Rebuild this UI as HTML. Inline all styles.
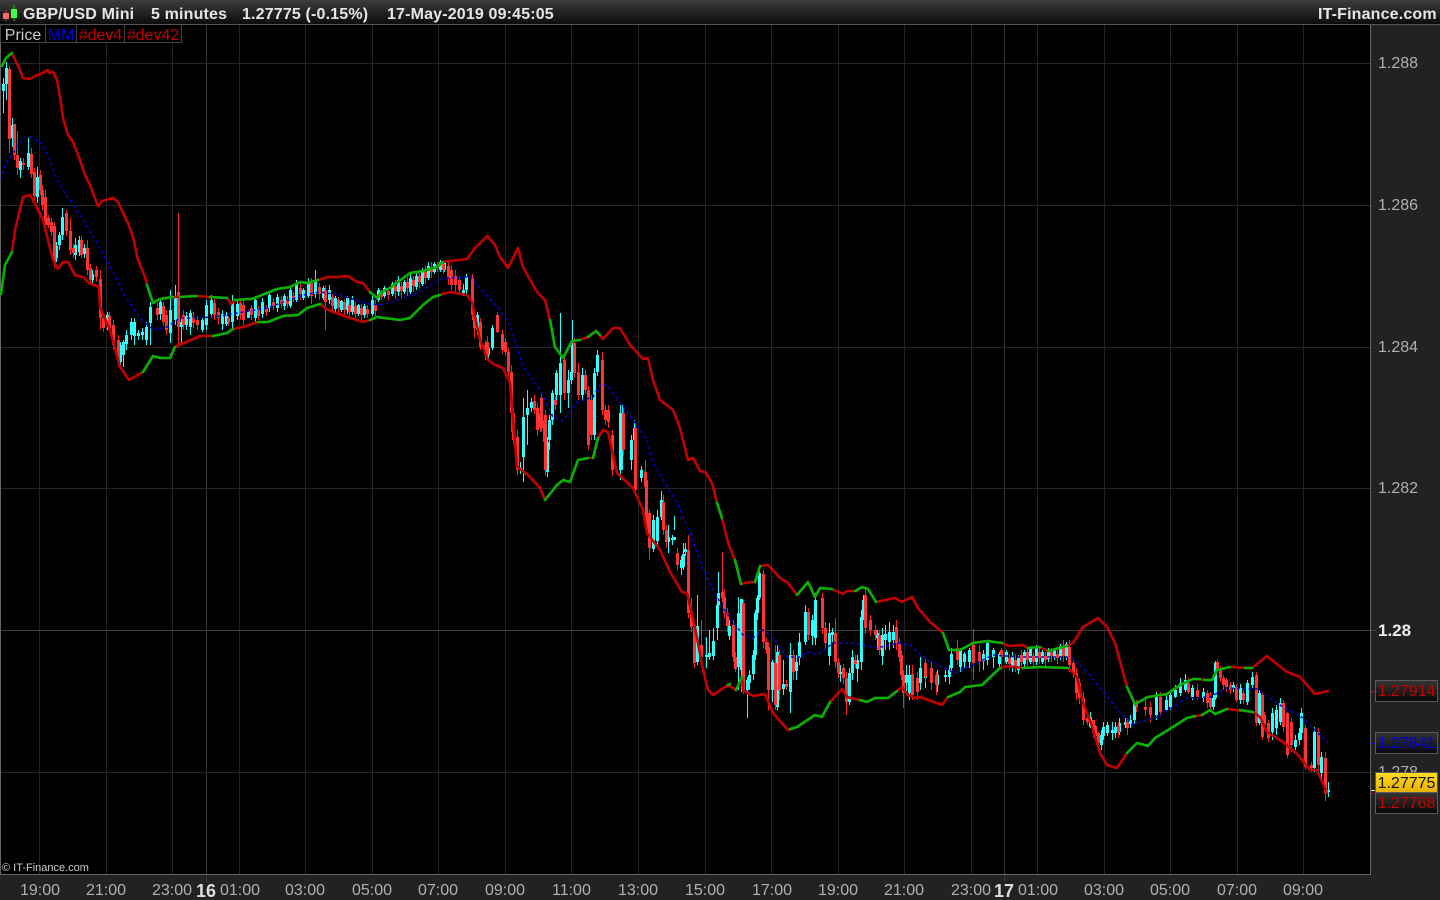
<!DOCTYPE html>
<html><head><meta charset="utf-8"><title>GBP/USD Mini</title>
<style>
html,body{margin:0;padding:0;background:#000;width:1440px;height:900px;overflow:hidden}
body{position:relative;font-family:"Liberation Sans",sans-serif}
.a{position:absolute;white-space:nowrap}
#top{left:0;top:0;width:1440px;height:24px;background:linear-gradient(#3e3e3e,#262626 45%,#0c0c0c);border-bottom:1px solid #555}
.t{font-weight:bold;font-size:16px;color:#e6e6e6;top:6px;line-height:18px;letter-spacing:.16px}
.lg{top:25px;height:17px;border:1px solid #444;border-top:0;font-size:16px;line-height:19px;text-align:center;box-sizing:content-box;background:#000;overflow:hidden}
.lg span{position:relative;top:1px}
#right{left:1371px;top:25px;width:69px;height:850px;background:#222}
#bottom{left:0;top:875px;width:1440px;height:25px;background:#222}
.y{left:1378px;font-size:16px;line-height:18px;color:#b0b0b0}
.x{top:882px;font-size:16px;line-height:18px;color:#b0b0b0}
.tag{left:1375px;width:61px;height:20px;border:1px solid #5a5a5a;font-size:16px;line-height:22px;text-align:center;background:linear-gradient(#333,#0a0a0a)}
</style></head><body>
<div class="a" id="right"></div><div class="a" id="bottom"></div>
<svg class="a" style="left:0;top:0" width="1440" height="900" viewBox="0 0 1440 900">
<path fill="none" stroke="#232323" d="M39.500 25V882M106.500 25V882M172.500 25V882M239.500 25V882M305.500 25V882M372.500 25V882M438.500 25V882M505.500 25V882M571.500 25V882M638.500 25V882M705.500 25V882M771.500 25V882M838.500 25V882M904.500 25V882M971.500 25V882M1037.500 25V882M1104.500 25V882M1170.500 25V882M1237.500 25V882M1303.500 25V882"/>
<path fill="none" stroke="#363636" d="M206.500 25V882M1004.500 25V882"/>
<path fill="none" stroke="#262626" d="M0 63.500H1376M0 205.500H1376M0 347.500H1376M0 488.500H1376M0 772.500H1376"/>
<path fill="none" stroke="#404040" d="M0 630.500H1376"/>
<path fill="none" stroke="#666" d="M0.500 25V875M1370.500 25V875M0 874.500H1371"/>

<g transform="translate(.5 0)">
<path fill="none" stroke="#20ffff" stroke-width="1" d="M3 78V113M6 62V100M12 118V147M20 158V178M28 138V170M37 167V203M56 242V262M59 232V250M62 208V240M75 238V260M79 236V256M84 244V258M92 270V284M107 312V330M120 342V367M123 340V367M126 330V350M131 318V340M134 318V345M138 330V340M142 328V340M146 322V345M150 302V345M160 298V320M170 290V343M175 285V325M181 317V345M186 312V330M190 310V335M202 318V332M206 300V330M211 295V318M222 310V330M226 312V326M232 295V330M237 300V320M248 310V318M255 296V322M262 298V318M269 292V312M277 294V312M284 294V310M290 286V308M296 280V302M303 288V300M308 278V298M315 270V298M323 286V300M329 285V304M335 296V312M341 300V312M347 296V314M352 296V315M358 304V316M364 304V318M372 296V316M378 288V302M384 286V298M392 282V296M398 276V296M404 280V294M410 274V294M416 272V290M422 268V286M428 262V280M434 262V274M440 260V272M444 262V272M463 284V296M466 274V296M477 312V335M488 342V360M492 325V350M497 312V330M520 462V474M523 398V482M527 390V445M531 398V412M547 437V477M549 415V450M552 390V425M556 370V400M560 313V413M568 370V408M571 365V384M572 320V375M582 368V400M594 368V440M597 350V376M620 405V480M622 405V470M631 435V470M634 420V445M641 466V482M653 515V552M657 510V545M661 491V520M668 525V553M672 535V545M674 516V530M681 556V575M683 543V570M685 543V556M697 595V665M706 637V668M709 630V660M713 628V660M717 600V640M718 572V610M729 620V640M738 597V690M741 599V692M747 677V718M749 670V690M753 650V680M755 610V660M757 595V620M759 565V600M772 660V702M777 645V710M783 660V695M790 643V713M796 655V680M799 633V665M805 605V645M812 615V645M815 593V645M829 623V665M832 628V642M840 665V682M849 668V705M852 650V680M857 655V682M861 610V670M863 595V620M877 630V650M882 628V665M885 625V650M889 622V650M893 625V648M906 665V695M909 665V700M920 657V690M925 660V688M937 670V692M945 670V682M949 665V684M951 648V672M960 648V672M964 652V668M969 648V668M983 650V670M987 640V665M993 648V668M999 652V668M1006 650V664M1012 652V672M1018 655V674M1024 650V668M1030 646V664M1036 645V665M1042 650V664M1048 648V662M1054 648V660M1060 644V660M1066 642V660M1090 712V728M1101 730V750M1103 722V740M1107 722V736M1112 722V740M1115 722V738M1119 718V735M1125 718V728M1130 715V728M1134 702V724M1156 692V720M1166 695V712M1170 690V710M1175 685V698M1180 678V696M1185 674V692M1192 685V700M1203 688V702M1213 695V710M1215 661V700M1233 682V692M1240 684V704M1247 680V705M1252 672V688M1259 690V725M1272 708V740M1276 705V735M1280 698V725M1295 735V750M1299 728V745M1301 708V740M1314 727V772M1321 752V780M1328 782V797"/>
<path fill="none" stroke="#30ffff" stroke-width="3" d="M3 84V91M6 68V84M12 125V138M20 161V170M28 153V167M37 177V197M56 246V258M59 235V245M62 217V235M75 245V255M79 240V252M84 248V254M92 274V280M107 315V325M120 345V362M123 342V355M126 335V344M131 322V335M134 322V336M138 333V336M142 332V335M146 327V340M150 307V323M160 302V314M170 310V333M175 298V320M181 322V327M186 316V325M190 313V327M202 320V330M206 305V325M211 300V314M222 314V324M226 316V324M232 303V322M237 304V316M248 311V318M255 300V318M262 302V314M269 295V308M277 297V308M284 296V306M290 290V306M296 284V300M303 290V298M308 282V296M315 280V294M323 288V298M329 290V300M335 298V309M341 301V310M347 298V310M352 300V312M358 305V314M364 306V315M372 300V314M378 290V300M384 288V296M392 284V294M398 280V292M404 282V292M410 278V292M416 276V287M422 272V284M428 266V278M434 264V272M440 262V270M444 263V270M463 290V293M466 277V290M477 315V330M488 348V355M492 328V348M497 315V325M520 468V470M523 417V457M527 408V415M531 402V408M547 442V472M549 420V440M552 393V420M556 373V395M560 363V395M568 380V393M571 372V380M572 345V372M582 375V395M594 373V435M597 355V372M620 413V470M622 413V440M631 440V460M634 428V440M641 470V478M653 520V549M657 517V541M661 500V517M668 537V542M672 538V540M674 537V540M681 560V568M683 554V567M685 549V552M697 626V662M706 655V657M709 653V657M713 641V656M717 605V628M718 593V605M729 626V636M738 613V667M741 599V670M747 680V690M749 675V683M753 655V674M755 613V655M757 598V613M759 573V598M772 662V690M777 652V707M783 684V689M790 655V692M796 662V671M799 642V658M805 612V642M812 620V636M815 600V638M829 633V656M832 632V635M840 672V674M849 673V702M852 657V673M857 660V669M861 617V662M863 600V617M877 633V638M882 635V656M885 634V640M889 632V642M893 632V640M906 675V683M909 675V693M920 668V683M925 668V678M937 675V685M945 675V677M949 670V677M951 654V668M960 650V667M964 654V662M969 650V662M983 654V661M987 643V660M993 650V657M999 654V664M1006 652V662M1012 656V668M1018 658V670M1024 652V664M1030 648V662M1036 648V662M1042 652V662M1048 650V659M1054 650V658M1060 646V657M1066 644V657M1090 717V727M1101 735V745M1103 727V736M1107 725V733M1112 730V733M1115 727V733M1119 723V732M1125 722V725M1130 720V724M1134 703V720M1156 697V715M1166 700V710M1170 695V707M1175 690V697M1180 683V693M1185 680V690M1192 688V697M1203 692V698M1213 698V707M1215 663V698M1233 685V688M1240 688V700M1247 683V702M1252 677V685M1259 693V723M1272 713V732M1276 710V728M1280 703V722M1295 740V747M1299 733V740M1301 713V733M1314 732V768M1321 757V773M1328 790V792"/>

<path fill="none" stroke="#ff2020" stroke-width="1" d="M9 66V153M14 124V160M17 131V175M23 158V170M31 148V178M34 168V200M40 170V195M42 185V210M45 190V232M48 215V228M51 218V236M54 222V268M66 210V236M70 218V255M73 244V258M81 236V258M87 240V275M90 264V284M96 266V282M100 270V330M103 314V332M109 312V332M113 320V350M118 335V367M157 303V320M163 302V326M166 310V335M178 213V345M183 310V330M193 312V328M197 316V330M214 298V320M218 308V325M228 316V326M240 298V320M243 300V326M251 305V320M258 306V320M266 305V316M273 298V310M281 296V308M287 296V308M293 292V302M300 282V300M311 278V304M319 283V300M325 285V330M332 294V312M338 297V314M344 299V316M349 300V318M355 302V320M361 304V322M367 305V318M375 300V316M381 290V300M388 287V300M395 280V298M401 282V298M407 277V296M413 276V292M419 270V288M425 265V284M431 262V278M437 262V272M443 262V274M448 262V285M451 265V290M455 270V292M459 276V294M472 274V320M474 312V338M480 318V350M485 340V360M487 336V360M497 312V333M502 330V354M505 338V356M508 348V376M511 365V432M513 408V445M517 430V475M534 395V414M537 402V436M540 408V432M541 392V432M544 415V446M545 410V476M555 396V410M564 355V400M574 338V378M578 363V400M585 370V394M588 386V450M591 395V440M602 352V415M605 405V425M608 405V428M612 430V476M623 408V456M635 423V495M646 475V535M645 460V490M649 510V560M663 495V535M666 525V548M677 548V570M688 535V618M691 598V632M694 622V668M701 620V662M722 552V602M724 589V618M727 608V632M733 620V662M735 652V672M743 600V694M763 570V648M766 638V654M768 642V710M775 645V710M779 650V700M786 680V690M793 650V680M808 608V640M822 593V634M825 645V650M825 622V650M835 618V668M838 658V678M843 664V684M846 672V715M855 655V668M865 590V634M870 615V636M875 625V640M879 630V655M896 620V650M899 638V662M901 650V680M903 670V708M912 665V700M917 672V700M925 658V682M931 662V690M936 672V695M957 640V665M973 629V680M979 645V672M1001 648V670M1009 654V670M1015 654V672M1021 650V668M1027 648V666M1033 652V668M1039 648V664M1045 652V666M1051 648V662M1057 650V664M1063 640V662M1069 640V672M1073 660V678M1076 668V700M1079 678V704M1083 692V725M1087 715V725M1093 720V738M1095 725V740M1098 732V748M1118 722V738M1127 718V735M1136 700V712M1145 700V716M1150 702V722M1160 692V716M1188 678V694M1197 684V700M1207 690V708M1210 692V712M1217 660V672M1220 666V682M1223 675V690M1226 678V692M1230 682V694M1236 684V702M1243 690V704M1256 672V726M1262 692V740M1264 712V730M1268 720V742M1283 700V732M1287 712V758M1291 718V752M1305 725V770M1311 762V772M1318 728V770M1325 752V801"/>
<path fill="none" stroke="#ff3333" stroke-width="3" d="M9 69V139M14 124V155M17 155V168M23 163V165M31 154V174M34 172V196M40 175V190M42 190V205M45 197V225M48 218V225M51 222V232M54 226V263M66 213V231M70 231V250M73 248V253M81 240V255M87 248V270M90 268V280M96 270V277M100 279V318M103 318V328M109 316V328M113 325V345M118 340V362M157 308V315M163 306V322M166 315V330M178 292V327M183 315V325M193 317V323M197 320V325M214 303V315M218 312V318M228 318V322M240 303V315M243 305V320M251 308V315M258 309V316M266 308V312M273 302V306M281 300V304M287 300V304M293 296V298M300 288V294M311 283V296M319 287V294M325 290V302M332 297V306M338 300V308M344 302V310M349 305V312M355 306V314M361 308V315M367 309V314M375 304V311M381 294V297M388 291V295M395 286V291M401 286V291M407 282V288M413 280V286M419 276V282M425 272V278M431 268V272M437 265V268M443 264V270M448 266V278M451 270V285M455 276V285M459 280V290M472 278V315M474 316V328M480 322V347M485 345V355M487 342V355M497 315V332M502 334V350M505 342V352M508 352V372M511 372V413M513 413V440M517 437V470M534 401V410M537 408V430M540 413V428M541 398V428M544 420V442M545 415V470M555 400V405M564 360V393M574 343V373M578 372V395M585 375V390M588 390V445M591 400V435M602 360V410M605 410V420M608 410V422M612 435V470M623 413V450M635 428V490M646 480V530M645 472V487M649 513V548M663 502V530M666 530V542M677 553V565M688 550V613M691 613V627M694 627V663M701 645V657M722 592V598M724 597V613M727 613V626M733 625V657M735 657V669M743 603V690M763 574V642M766 642V650M768 647V690M775 663V705M779 655V690M786 684V687M793 655V672M808 612V635M822 598V628M825 628V643M835 633V662M838 662V673M843 668V678M846 678V702M855 660V664M865 595V628M870 620V630M875 630V635M879 635V650M896 627V643M899 643V657M901 655V675M903 675V693M912 674V695M917 678V692M925 663V677M931 668V683M936 675V685M957 648V660M973 645V663M979 652V662M1001 650V657M1009 658V664M1015 660V666M1021 655V662M1027 652V660M1033 656V662M1039 652V658M1045 656V660M1051 652V656M1057 654V658M1063 646V656M1069 647V665M1073 663V673M1076 673V693M1079 683V698M1083 698V720M1087 718V722M1093 720V733M1095 726V736M1098 733V743M1118 726V732M1127 722V728M1136 703V707M1145 707V710M1150 707V715M1160 697V712M1188 683V692M1197 690V697M1207 693V703M1210 698V707M1217 662V670M1220 670V678M1223 678V685M1226 680V687M1230 685V690M1236 687V700M1243 693V700M1256 675V723M1262 695V737M1264 715V725M1268 723V738M1283 703V727M1287 713V755M1291 722V745M1305 728V767M1311 765V768M1318 732V765M1325 758V793"/>
</g>

<path fill="none" stroke="#0000e6" stroke-width="1.500" stroke-dasharray="3 3" d="M1 180L5 165L15 150L23 138L30 137L40 142L48 155L55 175L63 190L77 210L97 243L117 280L123 293L140 318L153 330L167 327L180 318L200 318L220 316L267 308L303 295L320 292L340 295L367 304L383 305L417 293L443 278L470 277L500 310L510 325L523 367L540 390L553 417L563 421L577 402L593 397L600 385L607 385L633 420L647 440L653 463L677 503L690 533L703 570L723 608L743 635L753 638L763 630L773 638L787 657L800 657L807 652L817 655L833 643L853 643L877 648L898 643L910 645L927 660L955 673L977 663L993 655L1020 657L1067 657L1073 658L1090 675L1120 713L1133 724L1157 717L1187 698L1210 697L1227 688L1257 689L1283 707L1303 718L1328 743"/>

<g fill="none" stroke-width="2.600" stroke-linejoin="round" stroke-linecap="round">
<path stroke="#c40000" d="M12 53L16 62L20 70L23 78L30 79L35 76L43 73L48 70L50 73L53 72L57 80L60 97L63 118L68 135L73 142L80 160L85 175L90 185L98 206L102 201L113 198L118 202L125 217L128 223L133 237L138 260L145 277L147 285L153 303L160 299L173 297L197 296L210 297L227 298L231 304L235 300L252 299L267 293L277 289L290 287L300 282L307 283L318 280L328 277L337 277L348 276L357 282L363 283L370 292L377 298L382 292L390 288L410 273L423 271L437 267L443 262L467 259L475 248L487 236L495 245L500 257L508 268L518 248L523 267L537 292L545 300L550 320L555 347L563 358L572 341L580 340L588 337L596 331L603 339L613 328L620 328L630 345L643 359L648 358L653 380L660 400L673 410L680 428L688 460L693 458L700 471L705 472L712 483L717 503L722 518L728 543L735 560L741 584L750 582L755 582L760 566L768 565L780 578L788 583L797 595L808 582L815 597L820 588L832 589L843 594L847 591L857 591L862 587L868 589L876 602L895 598L902 602L912 597L918 608L930 622L943 633L949 650L960 650L973 643L987 641L1002 643L1008 646L1023 645L1028 648L1040 647L1048 651L1067 646L1073 643L1083 627L1098 618L1107 627L1115 643L1127 687L1135 704L1148 697L1167 694L1180 685L1193 679L1212 680L1217 670L1230 667L1252 668L1267 656L1287 672L1300 677L1315 694L1328 691"/>
<path stroke="#c40000" d="M12 252L15 230L23 197L30 195L35 204L43 220L53 260L58 269L63 262L68 262L75 275L83 277L89 283L99 287L100 307L110 330L120 367L129 380L143 372L153 356L160 358L170 358L175 347L200 336L213 336L227 333L233 329L243 327L258 322L268 322L283 316L298 315L307 308L320 304L328 310L347 317L363 322L370 320L377 317L400 320L410 318L423 305L433 297L450 292L467 295L472 302L480 340L488 360L495 365L503 368L510 383L517 467L528 475L540 488L545 500L557 485L563 480L570 482L578 460L588 458L593 458L598 438L603 430L608 432L617 473L633 488L643 510L647 533L660 550L670 572L682 592L687 593L695 627L703 670L708 690L713 695L728 685L736 690L742 677L743 690L753 696L765 694L773 713L788 730L797 727L815 715L822 717L830 702L842 689L847 697L867 702L875 698L888 698L902 687L908 695L915 698L920 697L942 705L948 697L960 692L965 687L982 685L1000 668L1007 666L1023 668L1040 667L1068 668L1077 677L1083 703L1090 720L1100 753L1107 765L1117 768L1127 753L1137 743L1148 746L1155 738L1168 730L1187 718L1202 715L1210 710L1215 714L1227 709L1253 712L1260 717L1267 732L1283 742L1297 754L1310 770L1317 770L1327 793"/>
<path stroke="#00b400" d="M2 66L6 58L12 53M147 285L153 303L160 299L173 297M180 297L197 296M210 297L227 298M235 300L250 299M252 299L267 293L277 289L290 287L300 282L307 283L318 280M370 292L377 298L382 292L390 288L410 273L423 271L437 267L443 262M550 320L555 347L563 358L572 341L580 340M588 337L596 331L600 335M717 503L722 518M735 560L741 584M755 582L760 566M797 595L808 582L815 597L820 588L832 589M855 591L862 587L868 589L876 602M943 633L949 650L960 650L973 643L987 641L1002 643M1028 648L1040 647M1048 651L1067 646M1127 687L1135 704L1148 697L1167 694L1180 685L1193 679L1200 679M1204 680L1212 680L1217 670L1230 667M1245 668L1252 668"/>
<path stroke="#00b400" d="M1 294L5 265L12 252M143 372L153 356L160 358L170 358L175 347M213 336L227 333L233 329M258 322L268 322L283 316L298 315L307 308L320 304M370 320L377 317L400 320L410 318L423 305L433 297L440 295M545 500L557 485L563 480L570 482L578 460L588 458M593 458L598 438M728 685L730 684M736 690L742 677M790 729L797 727L815 715L822 717L830 702M860 700L867 702L875 698L888 698L897 691M948 697L960 692L965 687L982 685L1000 668M1023 668L1040 667L1068 668M1127 753L1137 743L1148 746L1155 738L1168 730L1187 718L1195 716M1202 715L1210 710L1215 714L1227 709M1240 710L1253 712"/>
</g>

<path fill="none" stroke="#c40000" d="M1371 691.500H1375"/>
<path fill="none" stroke="#0000e6" d="M1371 743.500H1375"/>
<path fill="none" stroke="#ddd" d="M1371 790.500H1375"/>
<path fill="none" stroke="#c40000" d="M1371 793.500H1375"/>
</svg>

<div class="a" id="top"></div>
<svg class="a" style="left:0;top:0" width="20" height="24">
<path stroke="#c44" d="M6 10V21"/><rect x="3" y="13" width="6" height="6" fill="#f66" stroke="none"/>
<path stroke="#2c2" d="M14 5V21"/><rect x="11" y="9" width="6" height="9" fill="#4f4" stroke="none"/>
</svg>
<div class="a t" style="left:23px">GBP/USD Mini</div>
<div class="a t" style="left:151px">5 minutes</div>
<div class="a t" style="left:242px">1.27775 (-0.15%)</div>
<div class="a t" style="left:387px">17-May-2019 09:45:05</div>
<div class="a t" style="left:1318px">IT-Finance.com</div>

<div class="a lg" style="left:0;width:44px;color:#ccc"><span>Price</span></div>
<div class="a lg" style="left:45px;width:30px;color:#0000e6"><span>MM</span></div>
<div class="a lg" style="left:76px;width:47px;color:#c40000"><span>#dev4</span></div>
<div class="a lg" style="left:124px;width:56px;color:#c40000"><span>#dev42</span></div>

<div class="a y" style="top:55px">1.288</div>
<div class="a y" style="top:197px">1.286</div>
<div class="a y" style="top:339px">1.284</div>
<div class="a y" style="top:480px">1.282</div>
<div class="a y" style="top:622px;font-weight:bold;color:#eee;font-size:17px">1.28</div>
<div class="a y" style="top:764px">1.278</div>

<div class="a tag" style="top:680px;color:#c40000">1.27914</div>
<div class="a tag" style="top:732px;color:#0000e6">1.27841</div>
<div class="a tag" style="top:792px;color:#c40000">1.27768</div>
<div class="a tag" style="top:772px;height:19px;color:#111;background:linear-gradient(#ffdc20,#e8b000);line-height:21px">1.27775</div>

<div class="a" style="left:2px;top:862px;font-size:11px;line-height:13px;color:#ccc">© IT-Finance.com</div>

<div class="a x" style="left:20px">19:00</div>
<div class="a x" style="left:86px">21:00</div>
<div class="a x" style="left:152px">23:00</div>
<div class="a x" style="left:196px;font-weight:bold;color:#ddd;font-size:18px">16</div>
<div class="a x" style="left:220px">01:00</div>
<div class="a x" style="left:285px">03:00</div>
<div class="a x" style="left:352px">05:00</div>
<div class="a x" style="left:418px">07:00</div>
<div class="a x" style="left:485px">09:00</div>
<div class="a x" style="left:552px">11:00</div>
<div class="a x" style="left:618px">13:00</div>
<div class="a x" style="left:685px">15:00</div>
<div class="a x" style="left:752px">17:00</div>
<div class="a x" style="left:818px">19:00</div>
<div class="a x" style="left:884px">21:00</div>
<div class="a x" style="left:951px">23:00</div>
<div class="a x" style="left:994px;font-weight:bold;color:#ddd;font-size:18px">17</div>
<div class="a x" style="left:1018px">01:00</div>
<div class="a x" style="left:1084px">03:00</div>
<div class="a x" style="left:1150px">05:00</div>
<div class="a x" style="left:1217px">07:00</div>
<div class="a x" style="left:1283px">09:00</div>
</body></html>
